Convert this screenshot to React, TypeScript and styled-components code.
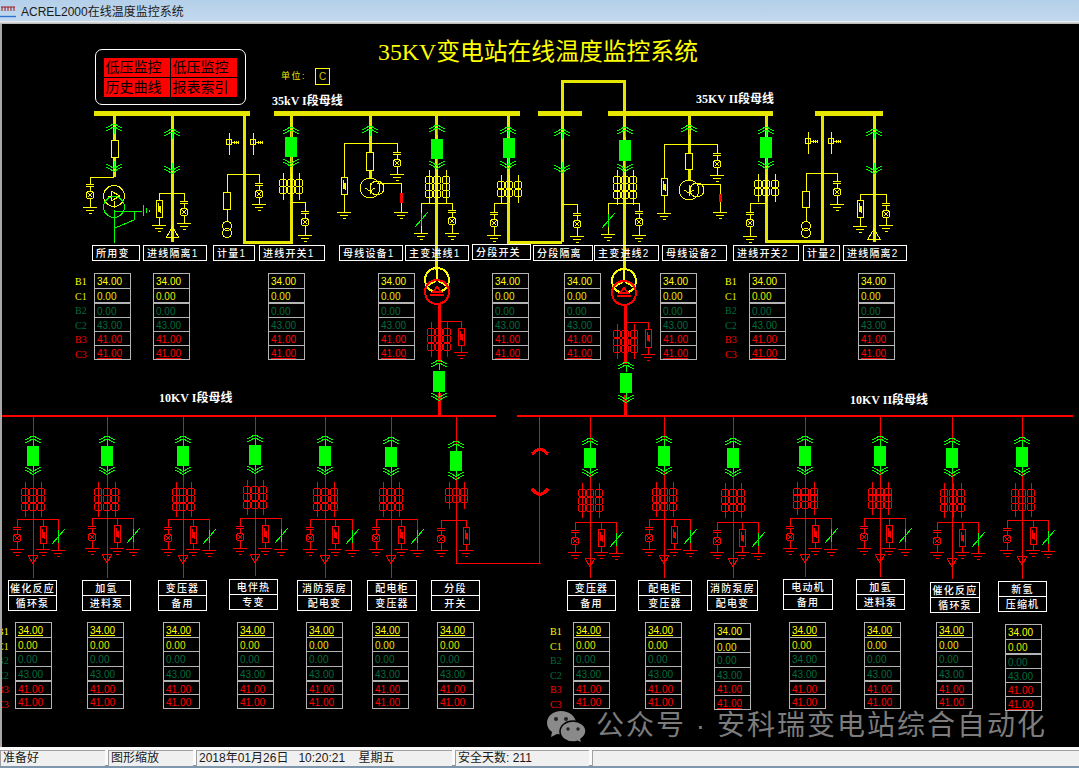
import * as React from 'react'
import styled, { createGlobalStyle } from 'styled-components'

const Y = '#ffff00'
const YT = '#e6e600'
const G = '#00ff00'
const R = '#ff0000'
const DG = '#006b3c'

// canvas starts here on the page, all diagram numbers are page coordinates
const OX = 2
const OY = 24

const GlobalStyle = createGlobalStyle`
  html, body { margin: 0; padding: 0; background: #000; overflow: hidden; }
  body { font-family: "Liberation Sans", "Noto Sans CJK SC", sans-serif; }
`

const Page = styled.div`
  width: 1079px;
  height: 768px;
  display: flex;
  flex-direction: column;
`

const TitleBar = styled.div`
  height: 21px;
  flex: none;
  display: flex;
  align-items: center;
  gap: 5px;
  background: linear-gradient(#b4cfe9, #c3d9ee);
  font-size: 12px;
  color: #1a1a1a;
`

const TitleEdge = styled.div`
  height: 3px;
  flex: none;
  background: linear-gradient(#f4f6f8, #b0b0b0);
`

const Canvas = styled.div`
  flex: 1;
  position: relative;
  overflow: hidden;
  background: #000;
  border-left: 2px solid #a8a8a8;
`

const Drawing = styled.svg`
  position: absolute;
  left: 0;
  top: 0;
  shape-rendering: crispEdges;
`

const SystemTitle = styled.div`
  position: absolute;
  left: ${378 - OX}px;
  top: ${37 - OY}px;
  font-family: "Liberation Serif", "Noto Sans CJK SC", serif;
  font-size: 23.8px;
  line-height: 30px;
  color: ${Y};
  white-space: nowrap;
`

const MenuFrame = styled.div`
  position: absolute;
  left: ${95 - OX}px;
  top: ${49 - OY}px;
  width: 151px;
  height: 56px;
  box-sizing: border-box;
  border: 1.5px solid #fff;
  border-radius: 7px;
  padding: 7.5px 7.5px;
`

const MenuGrid = styled.div`
  width: 133px;
  height: 39px;
  display: grid;
  grid-template-columns: 1fr 1fr;
  grid-template-rows: 1fr 1fr;
  gap: 1px;
  background: #000;
`

const MenuCell = styled.div`
  background: ${R};
  color: #000;
  font-size: 14px;
  line-height: 19px;
  padding-left: 2px;
  white-space: nowrap;
`

const UnitLabel = styled.div`
  position: absolute;
  left: ${281 - OX}px;
  top: ${70 - OY}px;
  font-size: 9px;
  line-height: 13px;
  letter-spacing: 1.5px;
  color: ${YT};
`

const UnitBox = styled.div`
  position: absolute;
  left: ${315 - OX}px;
  top: ${68 - OY}px;
  width: 15px;
  height: 17px;
  box-sizing: border-box;
  border: 1px solid ${Y};
  color: #c8c800;
  font-size: 10px;
  line-height: 15px;
  text-align: center;
`

const BusName = styled.div<{ $x: number; $y: number }>`
  position: absolute;
  left: ${(p) => p.$x - OX}px;
  top: ${(p) => p.$y - OY}px;
  font-family: "Liberation Serif", "Noto Sans CJK SC", serif;
  font-weight: 700;
  font-size: 12px;
  line-height: 14px;
  color: #fff;
  white-space: nowrap;
`

const NameBox = styled.div<{ $x: number; $y: number; $w: number }>`
  position: absolute;
  left: ${(p) => p.$x - OX}px;
  top: ${(p) => p.$y - OY}px;
  width: ${(p) => p.$w}px;
  height: 16px;
  box-sizing: border-box;
  border: 1px solid #fff;
  padding-left: 3px;
  color: #fff;
  font-size: 10px;
  font-weight: 500;
  line-height: 15px;
  letter-spacing: 1.2px;
  white-space: nowrap;
`

const NameStack = styled.div<{ $x: number; $y: number; $w: number }>`
  position: absolute;
  left: ${(p) => p.$x - OX}px;
  top: ${(p) => p.$y - OY}px;
  width: ${(p) => p.$w}px;
  display: flex;
  flex-direction: column;
`

const NameRow = styled.div`
  height: 16px;
  box-sizing: border-box;
  border: 1px solid #fff;
  & + & { margin-top: -1px; }
  color: #fff;
  font-size: 10px;
  font-weight: 500;
  line-height: 15px;
  letter-spacing: 1.2px;
  text-align: center;
  white-space: nowrap;
`

const ValueTable = styled.div<{ $x: number; $y: number }>`
  position: absolute;
  left: ${(p) => p.$x - OX}px;
  top: ${(p) => p.$y - OY}px;
  width: 37px;
  height: 87px;
  box-sizing: border-box;
  border: 1px solid #b4b4b4;
  display: grid;
  grid-template-rows: repeat(6, 1fr);
`

const ValueCell = styled.div<{ $color: string; $line: boolean; $thick: boolean }>`
  min-height: 0;
  overflow: hidden;
  color: ${(p) => p.$color};
  border-top: ${(p) => (p.$thick ? '2px' : '1px')} solid #b4b4b4;
  &:first-child { border-top: 0; }
  font-size: 10px;
  line-height: 15px;
  padding-left: 2px;
  text-decoration: ${(p) => (p.$line ? 'underline' : 'none')};
`

const PhaseList = styled.div<{ $x: number; $y: number }>`
  position: absolute;
  left: ${(p) => p.$x - OX}px;
  top: ${(p) => p.$y - OY}px;
  display: grid;
  grid-auto-rows: 14.5px;
`

const Phase = styled.div<{ $color: string }>`
  font-family: "Liberation Serif", serif;
  font-size: 10px;
  line-height: 14px;
  color: ${(p) => p.$color};
`

const Watermark = styled.div`
  position: absolute;
  left: ${546 - OX}px;
  top: ${709 - OY}px;
  display: flex;
  align-items: center;
  gap: 10px;
  color: #7c7c7c;
  font-size: 28px;
  line-height: 34px;
  letter-spacing: 2px;
  white-space: nowrap;
`

const StatusBar = styled.div`
  height: 21px;
  flex: none;
  display: flex;
  gap: 3px;
  box-sizing: border-box;
  padding: 3px 0 2px;
  background: linear-gradient(#fbfbfb 85%, #7f97ad 85%);
`

const StatusPane = styled.div<{ $w: number }>`
  flex: ${(p) => (p.$w ? `0 0 ${p.$w}px` : '1')};
  box-sizing: border-box;
  background: #f0f0f0;
  border-left: 1px solid #a0a0a0;
  border-top: 1px solid #a0a0a0;
  padding-left: 2px;
  font-size: 12px;
  line-height: 15px;
  color: #1a1a1a;
  white-space: pre;
`

// ---- drawing parts ----

type PathProps = { d: string; c?: string; w?: number; fill?: string }
const P = ({ d, c = Y, w = 1, fill = 'none' }: PathProps) => (
  <path d={d} stroke={c} strokeWidth={w} fill={fill} />
)

const Ring = ({ x, y, r, c = Y, w = 1 }: { x: number; y: number; r: number; c?: string; w?: number }) => (
  <circle cx={x} cy={y} r={r} stroke={c} strokeWidth={w} fill="none" />
)

const ChevUp = ({ x, y, c = G }: { x: number; y: number; c?: string }) => (
  <P
    c={c}
    d={`M${x - 8} ${y + 2}L${x - 4} ${y}L${x - 1} ${y - 2}H${x + 1}L${x + 4} ${y}L${x + 8} ${y + 2}M${x - 8} ${y + 5}L${x - 4} ${y + 3}L${x - 1} ${y + 1}H${x + 1}L${x + 4} ${y + 3}L${x + 8} ${y + 5}M${x} ${y + 1}V${y + 8}`}
  />
)

const ChevDown = ({ x, y, c = G }: { x: number; y: number; c?: string }) => (
  <P
    c={c}
    d={`M${x - 8} ${y - 2}L${x - 4} ${y}L${x - 1} ${y + 2}H${x + 1}L${x + 4} ${y}L${x + 8} ${y - 2}M${x - 8} ${y - 5}L${x - 4} ${y - 3}L${x - 1} ${y - 1}H${x + 1}L${x + 4} ${y - 3}L${x + 8} ${y - 5}M${x} ${y - 1}V${y - 8}`}
  />
)

const Ground = ({ x, y, c = Y }: { x: number; y: number; c?: string }) => (
  <P c={c} d={`M${x - 7} ${y}H${x + 7}M${x - 4} ${y + 3}H${x + 4}M${x - 1.5} ${y + 6}H${x + 1.5}`} />
)

const Breaker = ({ x, y, h = 20 }: { x: number; y: number; h?: number }) => (
  <rect x={x - 6} y={y} width={12} height={h} fill={G} />
)

const Fuse = ({ x, y, h = 17 }: { x: number; y: number; h?: number }) => (
  <rect x={x - 3.5} y={y} width={7} height={h} fill="#000" stroke={Y} strokeWidth={1} />
)

// capacitor, lamp and earth hanging from a branch line
const LampLeg = ({ x, y0, cap, g, c = Y }: { x: number; y0: number; cap: number; g: number; c?: string }) => {
  const ly = cap + 11
  return (
    <>
      <P c={c} d={`M${x} ${y0}V${cap}M${x - 4} ${cap}H${x + 4}M${x - 4} ${cap + 2}H${x + 4}M${x} ${cap + 2}V${ly - 4}M${x} ${ly + 4}V${g}`} />
      <Ring x={x} y={ly} r={4} c={c} />
      <P c={c} d={`M${x - 2.5} ${ly - 2.5}L${x + 2.5} ${ly + 2.5}M${x - 2.5} ${ly + 2.5}L${x + 2.5} ${ly - 2.5}`} />
      <Ground x={x} y={g} c={c} />
    </>
  )
}

// surge arrester box with its earth
const ArresterLeg = ({ x, y0, top, g, c = Y, h = 17 }: { x: number; y0: number; top: number; g: number; c?: string; h?: number }) => (
  <>
    <P c={c} d={`M${x} ${y0}V${top}M${x} ${top + h}V${g}`} />
    <rect x={x - 3} y={top} width={6} height={h} fill="#000" stroke={c} strokeWidth={1} />
    <P c={c} d={`M${x - 1} ${top + 3}V${top + 9}L${x} ${top + 12}L${x + 1} ${top + 6}V${top + 13}`} w={1} />
    <Ground x={x} y={g} c={c} />
  </>
)

// earthing switch, stem with the green slash
const SlashLeg = ({ x, y0, g, c = Y }: { x: number; y0: number; g: number; c?: string }) => (
  <>
    <P c={c} d={`M${x} ${y0}V${g}`} />
    <P c={G} d={`M${x} ${g - 20}V${g - 7}M${x - 6} ${g - 6}L${x + 7} ${g - 21}`} />
    <Ground x={x} y={g} c={c} />
  </>
)

const CtGroup = ({ xs, ys, c = Y }: { xs: number[]; ys: number[]; c?: string }) => (
  <>
    {xs.map((x) => (
      <React.Fragment key={x}>
        <P c={c} d={`M${x} ${ys[0] - 10}V${ys[ys.length - 1] + 10}`} />
        {ys.map((y) => (
          <Ring key={y} x={x} y={y} r={4} c={c} />
        ))}
      </React.Fragment>
    ))}
  </>
)

const KeyMark = ({ x, y }: { x: number; y: number }) => (
  <>
    <P d={`M${x} ${y - 9}V${y + 13}M${x + 3} ${y}H${x + 9}M${x + 5} ${y - 1.5}V${y + 1.5}M${x + 7} ${y - 1.5}V${y + 1.5}M${x + 9} ${y - 1.5}V${y + 1.5}`} />
    <Ring x={x} y={y} r={3} />
  </>
)

const Cone = ({ x, y, c = R }: { x: number; y: number; c?: string }) => (
  <P c={c} d={`M${x - 5} ${y}H${x + 5}L${x} ${y + 9}Z`} />
)

const Triangle = ({ x, y }: { x: number; y: number }) => (
  <P d={`M${x - 6} ${y + 8}L${x} ${y - 2}L${x + 6} ${y + 8}ZM${x - 6} ${y + 8}H${x + 6}`} w={1} />
)

const Transformer = ({ x, y }: { x: number; y: number }) => (
  <>
    <Ring x={x} y={y} r={12} c={Y} w={2} />
    <P d={`M${x} ${y}V${y - 12}M${x} ${y}L${x - 10} ${y + 6}M${x} ${y}L${x + 10} ${y + 6}`} w={1.8} />
    <Ring x={x} y={y + 12} r={12} c={R} w={2} />
    <P c={R} w={1.8} d={`M${x - 4} ${y + 12}L${x} ${y + 7}L${x + 4} ${y + 12}ZM${x - 7} ${y + 15}H${x + 7}`} />
  </>
)

type HvBayProps = { x: number; chev: number; low: number }
const IsoBay = ({ x, chev, low }: HvBayProps) => (
  <>
    <ChevUp x={x} y={chev} />
    <ChevDown x={x} y={low} />
  </>
)

type LvBay = {
  x: number
  rect: number
  ct: number[]
  xs: number[]
  br: number
  left: number
  arr: number
  right?: number
  end: number
}

// one 10kV feeder
const Feeder = ({ b }: { b: LvBay }) => {
  const { x, rect, ct, xs, br, left, arr, right, end } = b
  const g = br + 30
  const last = right ?? arr
  return (
    <>
      <P c={R} d={`M${x} 417V${rect}M${x} ${rect + 26}V${end}`} />
      <Breaker x={x} y={rect} />
      <ChevUp x={x} y={rect - 8} />
      <ChevDown x={x} y={rect + 26} />
      <CtGroup xs={xs} ys={ct} c={R} />
      <P c={R} d={`M${left} ${br}H${last}`} />
      <LampLeg x={left} y0={br} cap={br + 8} g={g} c={R} />
      <ArresterLeg x={arr} y0={br} top={br + 7} g={g} c={R} />
      {right !== undefined && <SlashLeg x={right} y0={br} g={g + 1} c={R} />}
      {right !== undefined && <Cone x={x} y={br + 36} />}
    </>
  )
}

const lvBays: LvBay[] = [
  { x: 33, rect: 446, ct: [492, 499, 507], xs: [25, 33, 41], br: 519, left: 17, arr: 43, right: 58, end: 578 },
  { x: 107, rect: 446, ct: [492, 499, 507], xs: [98, 107, 115], br: 518, left: 92, arr: 117, right: 133, end: 578 },
  { x: 183, rect: 446, ct: [492, 499, 507], xs: [176, 183, 191], br: 519, left: 168, arr: 193, right: 209, end: 578 },
  { x: 255, rect: 445, ct: [490, 497, 505], xs: [247, 255, 263], br: 518, left: 240, arr: 265, right: 281, end: 576 },
  { x: 325, rect: 446, ct: [492, 499, 507], xs: [317, 325, 334], br: 519, left: 310, arr: 335, right: 352, end: 578 },
  { x: 391, rect: 447, ct: [492, 499, 507], xs: [383, 391, 399], br: 519, left: 376, arr: 401, right: 417, end: 578 },
  { x: 456, rect: 451, ct: [492, 499], xs: [449, 456, 464], br: 520, left: 441, arr: 466, end: 563 },
  { x: 590, rect: 448, ct: [493, 501, 508], xs: [582, 590, 599], br: 522, left: 575, arr: 601, right: 616, end: 578 },
  { x: 664, rect: 446, ct: [492, 499, 507], xs: [656, 664, 673], br: 519, left: 649, arr: 674, right: 690, end: 578 },
  { x: 733, rect: 448, ct: [493, 500, 508], xs: [725, 733, 741], br: 522, left: 717, arr: 742, right: 758, end: 578 },
  { x: 805, rect: 446, ct: [492, 498, 505], xs: [797, 805, 814], br: 518, left: 790, arr: 815, right: 831, end: 577 },
  { x: 880, rect: 446, ct: [492, 498, 505], xs: [872, 880, 888], br: 518, left: 864, arr: 889, right: 905, end: 577 },
  { x: 952, rect: 448, ct: [493, 500, 508], xs: [944, 953, 961], br: 522, left: 937, arr: 962, right: 978, end: 579 },
  { x: 1022, rect: 447, ct: [493, 500, 507], xs: [1015, 1022, 1031], br: 520, left: 1007, arr: 1033, right: 1048, end: 579 },
]

const Diagram = () => (
  <Drawing width={1077} height={723} viewBox={`${OX} ${OY} 1077 723`}>
    {/* 35kV buses */}
    <P c={YT} w={5} d="M94 113.5H250M274 113.5H520M538 113.5H582M608 113.5H773M815 113.5H883" />
    <P c={YT} w={3} d="M562 242V81H624.5V270" />
    <P c={YT} w={3} d="M114.5 116V177M172.5 116V242M244.5 116V242H291V116M436.5 116V270M508 116V242H562M766 116V241H822V116M874 116V242M370 116V178M689 116V180" />

    {/* 所用变 */}
    <ChevUp x={114} y={126} />
    <Fuse x={114.5} y={140} />
    <ChevDown x={114} y={169} />
    <P d="M114 177H90" />
    <LampLeg x={90} y0={177} cap={184} g={207} />
    <Ring x={114} y={196} r={10.5} />
    <P d="M111 191L120 196L111 201ZM108 196H120M114 201V208" />
    <Ring x={114} y={207} r={10.5} c={G} />
    <P c={G} d="M114.5 210V243M114.5 211H142M115 228L134 220V211M143 205V216M146 208V213M149 210V212" />

    {/* 进线隔离1 */}
    <IsoBay x={172} chev={131} low={171} />
    <P d="M159 193H184" />
    <ArresterLeg x={159} y0={193} top={200} g={225} />
    <LampLeg x={184} y0={193} cap={201} g={223} />
    <Triangle x={172.5} y={229} />

    {/* 计量1 */}
    <KeyMark x={229} y={142} />
    <KeyMark x={253} y={142} />
    <P d="M227 174H259M227 174V192M227 209V222" />
    <Fuse x={226.5} y={192} />
    <Ring x={227} y={226} r={4.5} />
    <Ring x={227} y={233} r={4.5} />
    <LampLeg x={259} y0={174} cap={183} g={204} />

    {/* 进线开关1 */}
    <ChevUp x={291} y={129} />
    <Breaker x={291} y={137} />
    <ChevDown x={291} y={164} />
    <CtGroup xs={[283, 291, 299]} ys={[183, 190]} />
    <P d="M291 202H305" />
    <LampLeg x={305} y0={202} cap={211} g={235} />

    {/* 母线设备1 */}
    <ChevUp x={370} y={128} />
    <Fuse x={370} y={152} h={18} />
    <P d="M344 143H397M344 143V212" />
    <ArresterLeg x={344} y0={143} top={177} g={212} />
    <LampLeg x={397} y0={143} cap={152} g={174} />
    <Ring x={370} y={188} r={10} />
    <Ring x={377} y={188} r={7} />
    <P d="M370 183V194M365 188L370 191L375 188M377 183H401V193M401 203V212" />
    <P c={R} w={3} d="M401 193V203" />
    <Ground x={401} y={212} />

    {/* 主变进线1 */}
    <ChevUp x={437} y={127} />
    <Breaker x={437} y={139} />
    <ChevDown x={437} y={166} />
    <CtGroup xs={[429, 437, 446]} ys={[180, 187, 194]} />
    <P d="M421 203H452" />
    <SlashLeg x={421} y0={203} g={233} />
    <LampLeg x={452} y0={203} cap={210} g={233} />

    {/* 分段开关 */}
    <ChevUp x={508} y={129} />
    <Breaker x={509} y={138} />
    <ChevDown x={508} y={166} />
    <CtGroup xs={[501, 509, 518]} ys={[185, 193]} />
    <P d="M494 203H508" />
    <LampLeg x={494} y0={203} cap={212} g={235} />

    {/* 分段隔离 */}
    <IsoBay x={562} chev={131} low={170} />
    <P d="M562 204H577" />
    <LampLeg x={577} y0={204} cap={213} g={236} />

    {/* 主变进线2 */}
    <ChevUp x={625} y={129} />
    <Breaker x={625} y={140} h={21} />
    <ChevDown x={625} y={169} />
    <CtGroup xs={[617, 625, 633]} ys={[180, 187, 195]} />
    <P d="M608 203H639" />
    <SlashLeg x={608} y0={203} g={234} />
    <LampLeg x={639} y0={203} cap={211} g={235} />

    {/* 母线设备2 */}
    <ChevUp x={689} y={127} />
    <Fuse x={689} y={153} h={16} />
    <P d="M664 144H717M664 144V178" />
    <ArresterLeg x={664} y0={144} top={178} g={213} />
    <LampLeg x={717} y0={144} cap={153} g={175} />
    <Ring x={689} y={190} r={10} />
    <Ring x={697} y={190} r={7} />
    <P d="M689 185V196M684 190L689 193L694 190M697 184H720V194M720 202V212" />
    <P c={R} w={3} d="M720 194V202" />
    <Ground x={720} y={212} />

    {/* 进线开关2 */}
    <ChevUp x={766} y={129} />
    <Breaker x={766} y={137} h={21} />
    <ChevDown x={766} y={166} />
    <CtGroup xs={[758, 766, 775]} ys={[184, 192]} />
    <P d="M750 203H766" />
    <LampLeg x={750} y0={203} cap={212} g={236} />

    {/* 计量2 */}
    <KeyMark x={808} y={141} />
    <KeyMark x={831} y={141} />
    <P d="M806 173H837M806 173V191M806 207V222" />
    <Fuse x={805.5} y={191} h={16} />
    <Ring x={806} y={226} r={4.5} />
    <Ring x={806} y={233} r={4.5} />
    <LampLeg x={837} y0={173} cap={181} g={204} />

    {/* 进线隔离2 */}
    <IsoBay x={874} chev={131} low={171} />
    <P d="M860 194H886" />
    <ArresterLeg x={860} y0={194} top={200} g={226} />
    <LampLeg x={886} y0={194} cap={203} g={225} />
    <Triangle x={874} y={231} />

    {/* main transformers and what hangs under them */}
    <Transformer x={437} y={280} />
    <Transformer x={624} y={281} />
    <P c={R} w={3} d="M439 304V362M439 393V415M625 305V364M625 395V415" />
    <P c={R} d="M439 321H461V328M461 345V352M625 322H648V329M648 347V354" />
    <CtGroup xs={[431, 439, 447]} ys={[332, 339, 347]} c={R} />
    <CtGroup xs={[617, 625, 634]} ys={[334, 342, 349]} c={R} />
    <ArresterLeg x={461} y0={321} top={328} g={352} c={R} />
    <ArresterLeg x={648} y0={322} top={329} h={18} g={354} c={R} />
    <ChevUp x={439} y={362} />
    <Breaker x={439} y={371} h={21} />
    <ChevDown x={439} y={398} />
    <ChevUp x={626} y={364} />
    <Breaker x={626} y={373} />
    <ChevDown x={626} y={400} />

    {/* 10kV buses */}
    <P c={R} w={2.5} d="M2 416H496M517 416H1073" />
    {lvBays.map((b) => (
      <Feeder key={b.x} b={b} />
    ))}

    {/* 分段 tie */}
    <P c={R} d="M456 563.5H541M539.5 417V563.5" />
    <P c={R} w={3} d="M532 454L536 450.5L540 449L544 450.5L548 454M532 489L536 493L540 494.5L544 493L548 489" />
  </Drawing>
)

const phases = ['B1', 'C1', 'B2', 'C2', 'B3', 'C3']
const colors = [Y, '#e8e800', DG, DG, R, R]

type TableData = { x: number; y: number; lines: number[]; thick: number; b2?: string }

const topTables: TableData[] = [94, 153, 268, 378, 492, 564, 660, 749, 858].map((x) => ({ x, y: 273, lines: [5], thick: 2 }))

const bottomTables: TableData[] = [
  { x: 15, y: 622, lines: [0, 4], thick: 4 },
  { x: 87, y: 622, lines: [0, 4], thick: 4 },
  { x: 163, y: 622, lines: [0, 4], thick: 4 },
  { x: 237, y: 622, lines: [0, 4], thick: 4 },
  { x: 306, y: 622, lines: [0], thick: 4 },
  { x: 372, y: 622, lines: [0, 4], thick: 4 },
  { x: 437, y: 622, lines: [0], thick: 4 },
  { x: 573, y: 622, lines: [0, 4], thick: 4 },
  { x: 645, y: 622, lines: [0], thick: 4 },
  { x: 714, y: 623, lines: [5], thick: 1 },
  { x: 789, y: 622, lines: [0], thick: 4, b2: '34.00' },
  { x: 864, y: 622, lines: [0, 4], thick: 4 },
  { x: 936, y: 622, lines: [0, 4], thick: 4 },
  { x: 1005, y: 624, lines: [5], thick: 2 },
]

const Values = ({ t }: { t: TableData }) => {
  const vals = ['34.00', '0.00', t.b2 ?? '0.00', '43.00', '41.00', '41.00']
  return (
    <ValueTable $x={t.x} $y={t.y}>
      {vals.map((v, i) => (
        <ValueCell key={i} $color={colors[i]} $line={t.lines.includes(i)} $thick={i === t.thick}>
          {v}
        </ValueCell>
      ))}
    </ValueTable>
  )
}

const Phases = ({ x, y }: { x: number; y: number }) => (
  <PhaseList $x={x} $y={y}>
    {phases.map((p, i) => (
      <Phase key={p} $color={colors[i]}>
        {p}
      </Phase>
    ))}
  </PhaseList>
)

const singleNames: [string, number, number, number][] = [
  ['所用变', 92, 245, 48],
  ['进线隔离1', 143, 245, 64],
  ['计量1', 213, 245, 42],
  ['进线开关1', 259, 245, 66],
  ['母线设备1', 339, 245, 64],
  ['主变进线1', 405, 245, 64],
  ['分段开关', 472, 244, 59],
  ['分段隔离', 533, 245, 60],
  ['主变进线2', 594, 245, 65],
  ['母线设备2', 662, 245, 65],
  ['进线开关2', 733, 245, 66],
  ['计量2', 803, 245, 37],
  ['进线隔离2', 843, 245, 64],
]

const stackedNames: [string, string, number, number, number][] = [
  ['催化反应', '循环泵', 8, 580, 49],
  ['加氢', '进料泵', 82, 580, 49],
  ['变压器', '备用', 158, 580, 49],
  ['电伴热', '专变', 229, 579, 49],
  ['消防泵房', '配电变', 297, 580, 55],
  ['配电柜', '变压器', 367, 580, 50],
  ['分段', '开关', 431, 580, 49],
  ['变压器', '备用', 567, 580, 49],
  ['配电柜', '变压器', 638, 580, 54],
  ['消防泵房', '配电变', 707, 580, 51],
  ['电动机', '备用', 783, 579, 50],
  ['加氢', '进料泵', 856, 579, 49],
  ['催化反应', '循环泵', 930, 582, 50],
  ['新氢', '压缩机', 998, 581, 49],
]

const AppIcon = () => (
  <svg width="16" height="14" viewBox="0 0 16 14">
    <path d="M1 3H15M2 3V7M5 3V7M8 3V7M11 3V7M14 3V7" stroke="#a01818" strokeWidth="1" fill="none" />
    <path d="M0 12.5H16" stroke="#2f6fd0" strokeWidth="1.4" />
  </svg>
)

const WeChat = () => (
  <svg width="40" height="33" viewBox="0 0 40 33">
    <path d="M15 1C7 1 1 6 1 13c0 4 2 7 5 9l-1 5 6-3c1 .3 3 .5 4 .5 8 0 15-5 15-11.500S23 1 15 1Z" fill="#8a8a8a" />
    <path d="M27 11c-7 0-13 4.500-13 10.500S20 32 27 32c1.500 0 3-.3 4-.6l5 1.600-1-4c3-2 5-4.500 5-8 0-5.500-6-10-13-10Z" fill="#8a8a8a" stroke="#000" strokeWidth="1.5" />
    <circle cx="10" cy="9" r="2" fill="#222" />
    <circle cx="20" cy="9" r="2" fill="#222" />
    <circle cx="22" cy="19" r="1.700" fill="#222" />
    <circle cx="32" cy="19" r="1.700" fill="#222" />
  </svg>
)

export default function App() {
  return (
    <Page>
      <GlobalStyle />
      <TitleBar>
        <AppIcon />
        ACREL2000在线温度监控系统
      </TitleBar>
      <TitleEdge />
      <Canvas>
        <Diagram />
        <SystemTitle>35KV变电站在线温度监控系统</SystemTitle>
        <MenuFrame>
          <MenuGrid>
            <MenuCell>低压监控</MenuCell>
            <MenuCell>低压监控</MenuCell>
            <MenuCell>历史曲线</MenuCell>
            <MenuCell>报表索引</MenuCell>
          </MenuGrid>
        </MenuFrame>
        <UnitLabel>单位:</UnitLabel>
        <UnitBox>C</UnitBox>
        <BusName $x={272} $y={94}>35kV I段母线</BusName>
        <BusName $x={696} $y={92}>35KV II段母线</BusName>
        <BusName $x={159} $y={391}>10KV I段母线</BusName>
        <BusName $x={850} $y={393}>10KV II段母线</BusName>
        {singleNames.map(([text, x, y, w]) => (
          <NameBox key={x} $x={x} $y={y} $w={w}>
            {text}
          </NameBox>
        ))}
        {stackedNames.map(([a, b, x, y, w]) => (
          <NameStack key={x} $x={x} $y={y} $w={w}>
            <NameRow>{a}</NameRow>
            <NameRow>{b}</NameRow>
          </NameStack>
        ))}
        <Phases x={75} y={275} />
        <Phases x={725} y={275} />
        <Phases x={-3} y={625} />
        <Phases x={550} y={625} />
        {topTables.map((t) => (
          <Values key={t.x} t={t} />
        ))}
        {bottomTables.map((t) => (
          <Values key={t.x} t={t} />
        ))}
        <Watermark>
          <WeChat />
          公众号 · 安科瑞变电站综合自动化
        </Watermark>
      </Canvas>
      <StatusBar>
        <StatusPane $w={105}>准备好</StatusPane>
        <StatusPane $w={85}>图形缩放</StatusPane>
        <StatusPane $w={256}>2018年01月26日   10:20:21    星期五</StatusPane>
        <StatusPane $w={134}>安全天数: 211</StatusPane>
        <StatusPane $w={0} />
      </StatusBar>
    </Page>
  )
}
